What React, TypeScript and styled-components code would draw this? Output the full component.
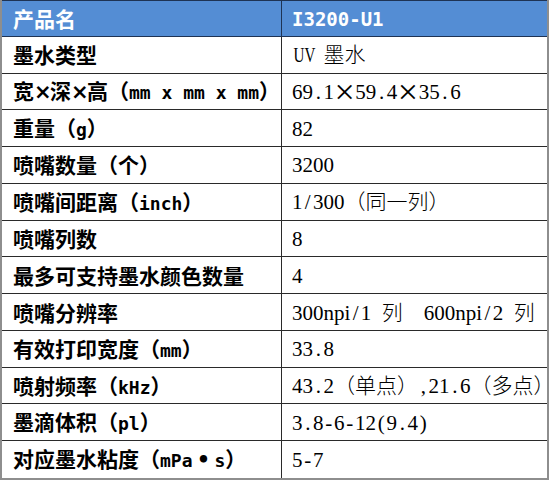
import React from 'react';
import styled, { createGlobalStyle } from 'styled-components';

const Global = createGlobalStyle`
  html, body { margin: 0; padding: 0; background: #ffffff; }
  body { width: 550px; height: 480px; overflow: hidden; }
`;

const Table = styled.div`
  width: 549px;
  height: 480px;
  box-sizing: border-box;
  display: grid;
  grid-template-columns: 280px 1fr;
  grid-template-rows: repeat(13, 1fr);
  border-left: 2px solid #8e8e8e;
  border-right: 2px solid #8e8e8e;
  border-bottom: 2px solid #8e8e8e;
`;

const Cell = styled.div<{ $head?: boolean; $left?: boolean; $last?: boolean }>`
  box-sizing: border-box;
  display: flex;
  align-items: center;
  min-width: 0;
  overflow: visible;
  white-space: pre;
  padding-left: ${(p) => (p.$left ? '11px' : '10px')};
  background: ${(p) => (p.$head ? '#548dd4' : '#ffffff')};
  color: ${(p) => (p.$head ? '#ffffff' : '#000000')};
  border-top: ${(p) => (p.$head ? '1px solid #1e3354' : 'none')};
  border-bottom: ${(p) =>
    p.$last ? 'none' : p.$head ? '1px solid #1e3354' : '1px solid #2a2a2a'};
  border-right: ${(p) => (p.$left ? (p.$head ? '1px solid #1e3354' : '1px solid #2a2a2a') : 'none')};
`;

const Label = styled.span`
  font-family: 'Noto Sans CJK SC', sans-serif;
  font-weight: 700;
  font-size: 21px;
  line-height: 1;
`;

const Lat = styled.span<{ $size: number }>`
  font-family: 'DejaVu Sans Mono', monospace;
  font-weight: 700;
  font-size: ${(p) => p.$size}px;
`;

const Wide = styled.span<{ $w: number }>`
  display: inline-block;
  width: ${(p) => p.$w}px;
  text-align: center;
  font-family: 'DejaVu Sans', sans-serif;
`;

const Value = styled.span`
  font-family: 'Noto Sans CJK SC', sans-serif;
  font-weight: 300;
  font-size: 21px;
  line-height: 1;
`;

/* half-width latin cell, like a Song-style CJK font's latin glyphs */
const Half = styled.span<{ $squeeze?: boolean }>`
  display: inline-block;
  width: 0.5em;
  text-align: center;
  font-family: 'Liberation Serif', serif;
  font-weight: 400;
  transform: ${(p) => (p.$squeeze ? 'scaleX(0.72)' : 'none')};
`;

const Serif = styled.span`
  font-family: 'Liberation Serif', serif;
  font-weight: 400;
`;

const Times = styled.span`
  font-family: 'Liberation Serif', serif;
  font-weight: 400;
  font-size: 36px;
  line-height: 0;
  padding: 0 0.5px;
  vertical-align: -5px;
`;

/* closing bracket at the end of a line, compressed to half width */
const Tail = styled.span`
  display: inline-block;
  width: 0.5em;
  overflow: visible;
  text-align: left;
`;

const rows: [string, string][] = [
  ['墨水类型', 'UV 墨水'],
  ['宽×深×高（mm x mm x mm）', '69.1×59.4×35.6'],
  ['重量（g）', '82'],
  ['喷嘴数量（个）', '3200'],
  ['喷嘴间距离（inch）', '1/300（同一列）'],
  ['喷嘴列数', '8'],
  ['最多可支持墨水颜色数量', '4'],
  ['喷嘴分辨率', '300npi/1 列  600npi/2 列'],
  ['有效打印宽度（mm）', '33.8'],
  ['喷射频率（kHz）', '43.2（单点）,21.6（多点）'],
  ['墨滴体积（pl）', '3.8-6-12(9.4)'],
  ['对应墨水粘度（mPa•s）', '5-7'],
];

const splitRuns = (t: string) => t.match(/[\x20-\x7e]+|[×•]|[^\x20-\x7e×•]+/g) || [];

function LeftText({ text, latSize }: { text: string; latSize: number }) {
  return (
    <>
      {splitRuns(text).map((run, i) => {
        if (/^[\x20-\x7e]+$/.test(run)) return <Lat key={i} $size={latSize}>{run}</Lat>;
        if (run === '×') return <Wide key={i} $w={16}>×</Wide>;
        if (run === '•') return <Wide key={i} $w={22}>•</Wide>;
        return <React.Fragment key={i}>{run}</React.Fragment>;
      })}
    </>
  );
}

function RightText({ text }: { text: string }) {
  const runs = splitRuns(text);
  return (
    <>
      {runs.map((run, i) => {
        if (/^[\x20-\x7e]+$/.test(run))
          return (
            <React.Fragment key={i}>
              {run.split(/([a-z]+)/).map((part, j) =>
                /^[a-z]+$/.test(part) ? (
                  <Serif key={j}>{part}</Serif>
                ) : (
                  part.split('').map((ch, k) => (
                    <Half key={`${j}-${k}`} $squeeze={/[A-Z]/.test(ch)}>
                      {ch}
                    </Half>
                  ))
                )
              )}
            </React.Fragment>
          );
        if (run === '×') return <Times key={i}>×</Times>;
        if (i === runs.length - 1 && run.endsWith('）'))
          return (
            <React.Fragment key={i}>
              {run.slice(0, -1)}
              <Tail>）</Tail>
            </React.Fragment>
          );
        return <React.Fragment key={i}>{run}</React.Fragment>;
      })}
    </>
  );
}

export default function App() {
  return (
    <>
      <Global />
      <Table>
        <Cell $head $left>
          <Label>产品名</Label>
        </Cell>
        <Cell $head>
          <Label>
            <LeftText text="I3200-U1" latSize={19} />
          </Label>
        </Cell>
        {rows.map(([k, v], i) => {
          const last = i === rows.length - 1;
          return (
            <React.Fragment key={k}>
              <Cell $left $last={last}>
                <Label>
                  <LeftText text={k} latSize={18} />
                </Label>
              </Cell>
              <Cell $last={last}>
                <Value>
                  <RightText text={v} />
                </Value>
              </Cell>
            </React.Fragment>
          );
        })}
      </Table>
    </>
  );
}
